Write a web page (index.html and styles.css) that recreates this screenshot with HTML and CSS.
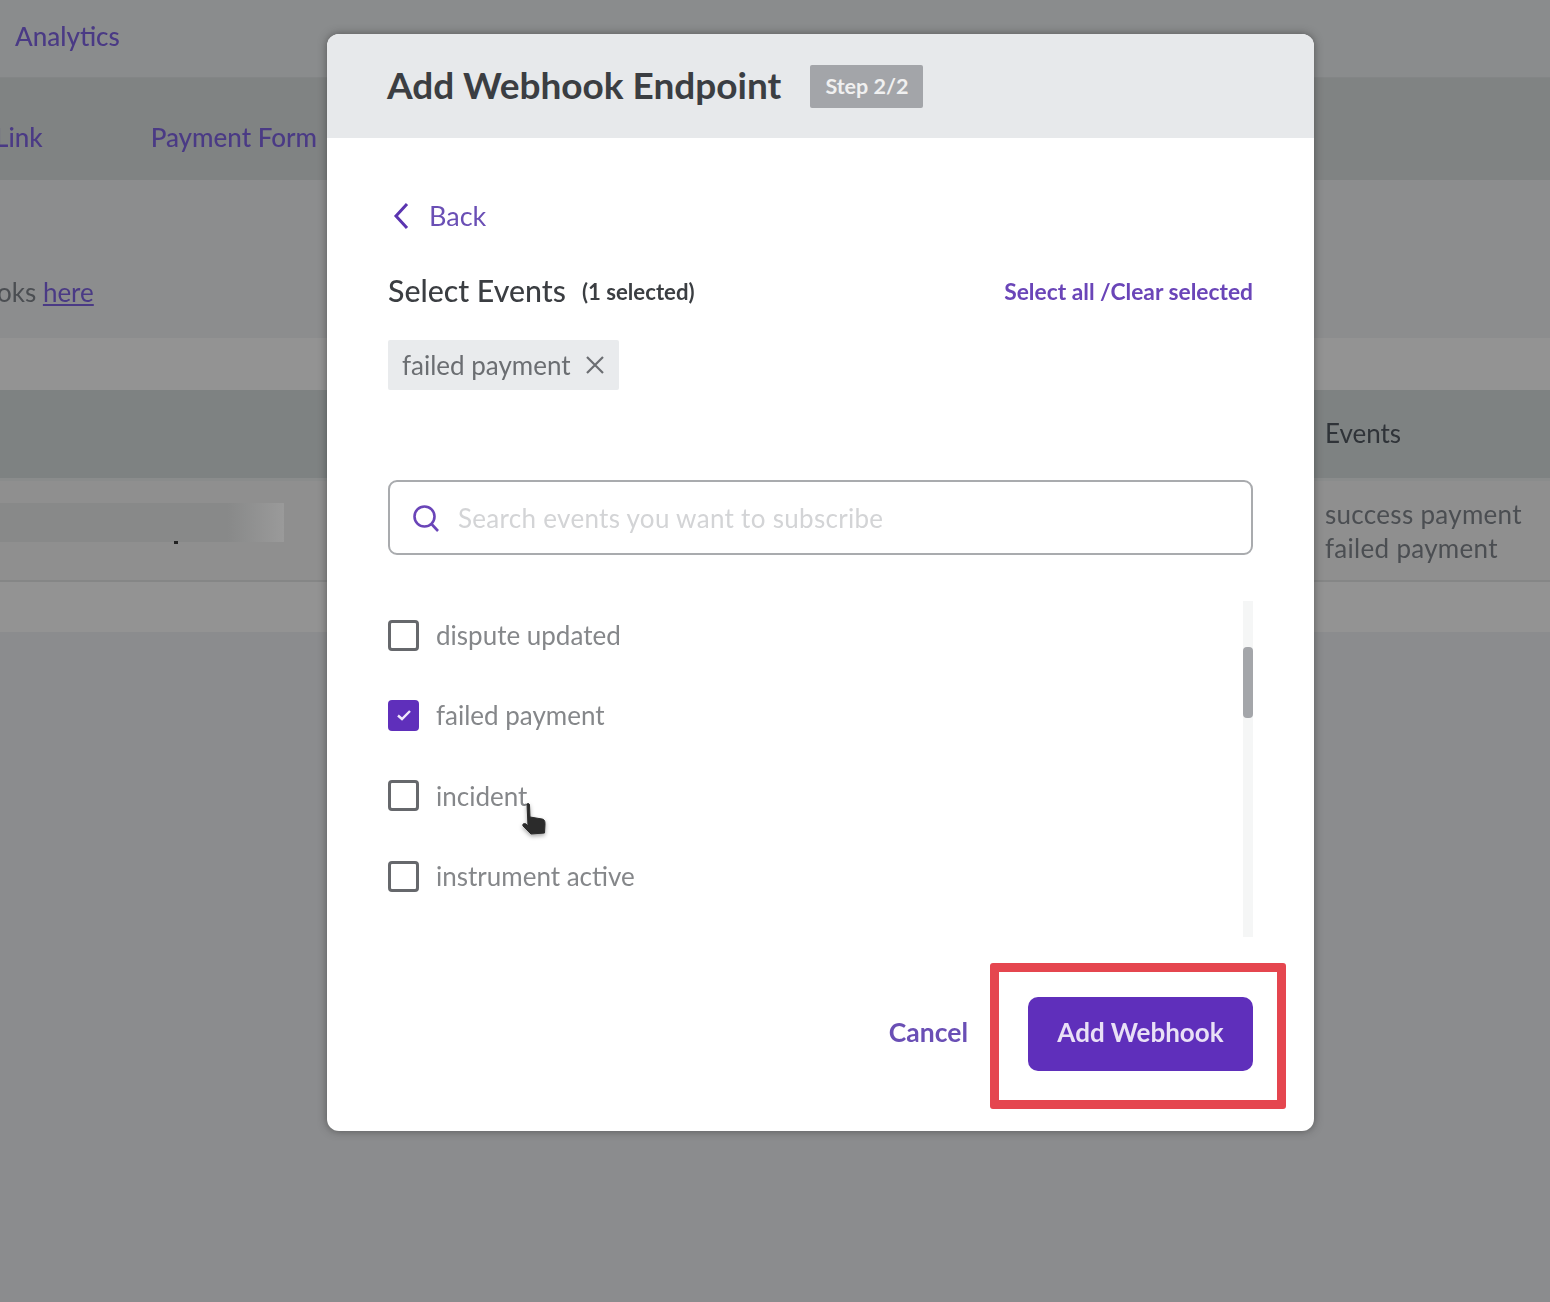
FILE: index.html
```html
<!DOCTYPE html>
<html lang="en">
<head>
  <meta charset="UTF-8">
  <title>Add Webhook Endpoint</title>
  <link rel="stylesheet" href="styles.css">
</head>
<body>

  <!-- Page behind the modal -->
  <div class="page">
    <div class="top-bar"><a class="nav-link">Analytics</a></div>
    <div class="tab-row">
      <a class="nav-link tab-first">Link</a>
      <a class="nav-link tab-second">Payment Form</a>
    </div>
    <div class="intro"><span class="intro-text">oks <a class="intro-link">here</a></span></div>
    <div class="band"></div>
    <div class="table-head"><span class="events-col">Events</span></div>
    <div class="table-row">
      <div class="blur-cell"><i class="speck"></i></div>
      <div class="events-col events-list">success payment<br>failed payment</div>
    </div>
    <div class="band band-last"></div>
  </div>

  <!-- Modal -->
  <div class="modal">
    <div class="modal-header">
      <h1>Add Webhook Endpoint</h1>
      <span class="step">Step 2/2</span>
    </div>

    <div class="modal-body">
      <a class="back">
        <svg width="18" height="28" viewBox="0 0 18 28"><path d="M15 2 L4 14 L15 26" fill="none" stroke="#5b35b0" stroke-width="3"/></svg>
        Back
      </a>

      <div class="events-head">
        <div class="events-label"><span class="events-title">Select Events</span><span class="events-count">(1 selected)</span></div>
        <a class="select-links">Select all /Clear selected</a>
      </div>

      <div class="tag">
        failed payment
        <svg width="20" height="20" viewBox="0 0 20 20"><path d="M2 2 L18 18 M18 2 L2 18" stroke="#6b6e72" stroke-width="2.2"/></svg>
      </div>

      <div class="search">
        <svg width="30" height="30" viewBox="0 0 30 30"><circle cx="13.5" cy="13.5" r="10" fill="none" stroke="#6a45b8" stroke-width="2.6"/><path d="M20.5 21 L27 28" stroke="#6a45b8" stroke-width="2.6"/></svg>
        <span class="placeholder">Search events you want to subscribe</span>
      </div>

      <div class="event-list">
        <div class="event-items">
          <label class="event"><span class="box"></span>dispute updated</label>
          <label class="event"><span class="box box-on"><svg width="18" height="14" viewBox="0 0 18 14"><path d="M3 7.5 L7 11 L15 3" fill="none" stroke="#f1e9fb" stroke-width="2.4"/></svg></span>failed payment</label>
          <label class="event"><span class="box"></span>incident</label>
          <label class="event"><span class="box"></span>instrument active</label>
        </div>
        <div class="scroll-track"><div class="scroll-thumb"></div></div>
      </div>

      <div class="modal-footer">
        <a class="cancel">Cancel</a>
        <button class="add-btn">Add Webhook</button>
      </div>
    </div>

    <!-- Annotation and mouse pointer -->
    <div class="highlight"></div>
    <svg class="pointer" width="32" height="38" viewBox="0 0 32 38">
      <path d="M9 2 C10 1 11.500 1.500 11.500 3 L12 15 L24 17 C27 17.500 27 20 27 22 L26.500 31 L13 32 L5 24 C4 22 6 21 8 22 L10 24 Z" fill="#2b2b2b" stroke="#2b2b2b" stroke-width="1"/>
    </svg>
  </div>

</body>
</html>
```

FILE: styles.css
```css
* {
  box-sizing: border-box;
}

html, body {
  margin: 0;
  height: 100%;
}

body {
  position: relative;
  overflow: hidden;
  font-family: Lato, "Open Sans", Arial, sans-serif;
  background-color: #8b8c8e;
}

.page {
  height: 100%;
  font-size: 26px;
  color: #4b4e52;
  filter: blur(0.5px);
}

.nav-link {
  color: #4a3a85;
  font-weight: 500;
}

.top-bar {
  height: 78px;
  padding: 20px 0 0 15px;
  background-color: #8a8c8d;
  border-bottom: 1px solid #838586;
}

.tab-row {
  display: flex;
  height: 102px;
  padding-top: 43px;
  background-color: #808383;
}

.tab-first {
  margin-left: -5px;
}

.tab-second {
  margin-left: 108px;
}

.intro {
  height: 158px;
  padding: 96px 0 0 0;
  background-color: #8c8d8e;
}

.intro-text {
  margin-left: -3px;
}

.intro-link {
  color: #4a3a85;
  text-decoration: underline;
}

.band {
  height: 52px;
  background-color: #939393;
}

.band-last {
  height: 50px;
}

.table-head {
  display: flex;
  justify-content: flex-end;
  height: 91px;
  padding-top: 27px;
  background-color: #7e8282;
  color: #2f3338;
  border-bottom: 3px solid #8a8c8c;
}

.events-col {
  width: 225px;
}

.table-row {
  display: flex;
  justify-content: space-between;
  height: 101px;
  padding-top: 16px;
  background-color: #8f8f8f;
  border-bottom: 2px solid #858686;
  line-height: 34px;
}

.events-list {
  letter-spacing: 0.3px;
}

.blur-cell {
  position: relative;
  width: 284px;
  height: 39px;
  margin-top: 6px;
  background: linear-gradient(to right, #888989 80%, #9a9a9a);
}

.speck {
  position: absolute;
  left: 174px;
  top: 38px;
  width: 4px;
  height: 3px;
  background-color: #222;
}

.modal {
  position: absolute;
  left: 327px;
  top: 34px;
  width: 987px;
  height: 1097px;
  background-color: #fff;
  border-radius: 12px;
  overflow: hidden;
  box-shadow: 0 0 8px rgba(40,40,40,0.55);
  filter: blur(0.4px);
}

.modal-header {
  display: flex;
  align-items: center;
  height: 104px;
  padding: 0 60px 4px;
  background-color: #e7e9eb;
}

h1 {
  margin: 0;
  font-size: 37px;
  font-weight: 700;
  color: #3b3e42;
}

.step {
  margin: 4px 0 0 29px;
  padding: 8px 15px;
  border-radius: 2px;
  background-color: #a3a5a9;
  color: #f0f0f0;
  font-size: 21.500px;
  font-weight: 700;
  line-height: 27px;
}

.modal-body {
  padding: 0 61px 0 61px;
}

.back {
  display: flex;
  align-items: center;
  gap: 19px;
  height: 32px;
  margin-top: 62px;
  padding-left: 4px;
  color: #6a4fb5;
  font-size: 27px;
  line-height: 30px;
}

.events-head {
  display: flex;
  justify-content: space-between;
  align-items: center;
  margin-top: 41px;
  height: 36px;
}

.events-label {
  display: flex;
  align-items: center;
}

.events-title {
  padding-bottom: 2px;
  font-size: 30.300px;
  font-weight: 500;
  color: #3b3e42;
}

.events-count {
  margin-left: 16px;
  font-size: 22.200px;
  font-weight: 700;
  color: #3b3e42;
}

.select-links {
  color: #6a45b8;
  font-size: 22.800px;
  font-weight: 700;
}

.tag {
  display: inline-flex;
  align-items: center;
  gap: 14px;
  height: 50px;
  margin-top: 31px;
  padding: 0 14px;
  border-radius: 2px;
  background-color: #e9ebed;
  color: #6b6e72;
  font-size: 26px;
}

.search {
  display: flex;
  align-items: center;
  gap: 17px;
  height: 75px;
  margin-top: 90px;
  padding-left: 21px;
  border: 2px solid #a9abae;
  border-radius: 9px;
}

.placeholder {
  color: #d3d4d6;
  font-size: 26px;
  letter-spacing: 0.3px;
}

.event-list {
  display: flex;
  justify-content: space-between;
  height: 336px;
  margin-top: 46px;
}

.event-items {
  margin-top: -6px;
}

.event {
  display: flex;
  align-items: center;
  gap: 17px;
  height: 80.300px;
  color: #85878a;
  font-size: 26px;
}

.box {
  display: flex;
  align-items: center;
  justify-content: center;
  width: 31px;
  height: 31px;
  border: 3px solid #66686c;
  border-radius: 4px;
}

.box-on {
  border: none;
  background-color: #5f2fbb;
}

.scroll-track {
  width: 10px;
  padding-top: 46px;
  background-color: #f5f6f6;
}

.scroll-thumb {
  height: 71px;
  border-radius: 4px;
  background-color: #a4a6aa;
}

.modal-footer {
  display: flex;
  justify-content: flex-end;
  align-items: center;
  gap: 60px;
  margin-top: 60px;
}

.cancel {
  padding-bottom: 5px;
  color: #6a4fb5;
  font-size: 26.500px;
  font-weight: 700;
}

.add-btn {
  width: 225px;
  height: 74px;
  padding: 0 0 5px;
  border: none;
  border-radius: 10px;
  background-color: #5f2fbb;
  color: #e9e0f6;
  font-family: inherit;
  font-size: 26px;
  font-weight: 700;
}

.highlight {
  position: absolute;
  left: 663px;
  top: 929px;
  width: 296px;
  height: 146px;
  border: 9px solid #e5464f;
  border-radius: 3px;
}

.pointer {
  position: absolute;
  left: 191px;
  top: 768px;
  filter: drop-shadow(0 2px 2px rgba(0,0,0,0.35));
}
```
